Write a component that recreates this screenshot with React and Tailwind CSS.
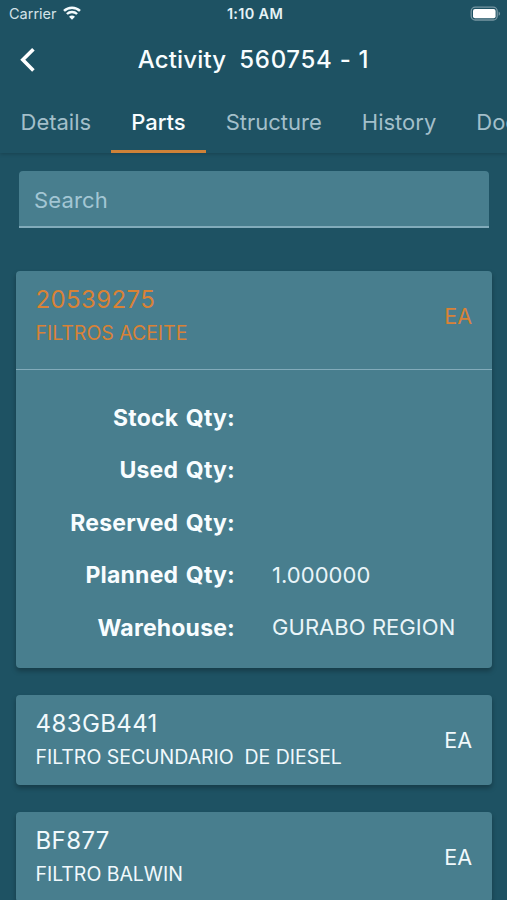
import React, { useState } from 'react';

const TABS = ['Details', 'Parts', 'Structure', 'History', 'Documents'];

const PARTS = [
    {
        code: '20539275',
        description: 'FILTROS ACEITE',
        uom: 'EA',
        details: [
            { label: 'Stock Qty:', value: '' },
            { label: 'Used Qty:', value: '' },
            { label: 'Reserved Qty:', value: '' },
            { label: 'Planned Qty:', value: '1.000000' },
            { label: 'Warehouse:', value: 'GURABO REGION' }
        ]
    },
    { code: '483GB441', description: 'FILTRO SECUNDARIO  DE DIESEL', uom: 'EA', details: [] },
    { code: 'BF877', description: 'FILTRO BALWIN', uom: 'EA', details: [] }
];

const WifiIcon = () => (
    <svg viewBox="0 0 18 14" className="relative -top-[1px] w-[18px] h-[14px]" fill="none" stroke="#f4fbfd">
        <path d="M1 4.9C5.4 0.6 12.6 0.6 17 4.9" strokeWidth="2.5" />
        <path d="M3.9 8C6.7 5.3 11.3 5.3 14.1 8" strokeWidth="2.4" />
        <path d="M9 13.8L6 10.8C7.7 9.2 10.3 9.2 12 10.8Z" fill="#f4fbfd" stroke="none" />
    </svg>
);

const BatteryIcon = () => (
    <svg viewBox="0 0 31 15" className="relative -top-[1px] w-[31px] h-[15px]">
        <rect x="1.2" y="1.2" width="26" height="12.8" rx="4" fill="none" stroke="#7797a3" strokeWidth="1.3" />
        <rect x="3" y="3" width="22.6" height="9.2" rx="2" fill="#ffffff" />
        <path d="M28.6 5.4C30.6 6.2 30.6 9 28.6 9.8Z" fill="#7797a3" />
    </svg>
);

const StatusBar = () => (
    <div className="h-7 grid grid-cols-3 items-center pl-[9px] pr-[6px]">
        <div className="flex items-center gap-[6px] text-[14.5px] text-[#d3e2e8]">
            <span>Carrier</span>
            <WifiIcon />
        </div>
        <div className="text-center text-[14.5px] tracking-[0.3px] font-semibold whitespace-nowrap text-[#e6f2f6]">1:10 AM</div>
        <div className="flex justify-end">
            <BatteryIcon />
        </div>
    </div>
);

const PartCard = ({ part, open, onToggle }) => (
    <div className="rounded-[4px] bg-[#487e8e] shadow-[0_3px_5px_rgba(0,0,0,0.28)]">
        <button
            onClick={onToggle}
            className={`w-full flex items-start justify-between px-5 pt-[14px] text-left ${open ? 'h-[98px] text-[#d98236]' : 'h-[90px] text-[#f1f9fc]'}`}
        >
            <div className="-ml-[0.5px]">
                <div className="text-[24px] leading-[30px] tracking-[0.4px]">{part.code}</div>
                <div className="mt-[6px] text-[19.5px] leading-6 tracking-[-0.03px] whitespace-pre">{part.description}</div>
            </div>
            <div className="mt-[17px] text-[21.5px] leading-7">{part.uom}</div>
        </button>

        {open && (
            <div className="border-t border-[#82abba] pt-[22px] pb-[14px]">
                {part.details.map(({ label, value }) => (
                    <div key={label} className="h-[52.4px] flex items-center gap-[37px]">
                        <div className="w-[219px] text-right text-[23px] tracking-[0.2px] [word-spacing:2px] font-bold text-[#f8fdff]">{label}</div>
                        <div className="text-[22px] tracking-[0.05px] text-[#eaf5f9]">{value}</div>
                    </div>
                ))}
            </div>
        )}
    </div>
);

export default function App() {
    const [tab, setTab] = useState('Parts');
    const [search, setSearch] = useState('');
    const [openCode, setOpenCode] = useState('20539275');

    return (
        <div className="h-[900px] w-full overflow-hidden bg-[#1e5263] font-[Inter,sans-serif]">
            <header className="h-[153px] shadow-[0_1px_4px_rgba(0,0,0,0.2)]">
                <StatusBar />
                <div className="h-16 grid grid-cols-[60px_1fr_60px] items-center">
                    <button className="pl-5">
                        <svg viewBox="0 0 16 26" className="w-4 h-[26px]" fill="none" stroke="#ffffff" strokeWidth="3.6">
                            <path d="M13.4 2.2L2.8 12.8L13.4 23.4" />
                        </svg>
                    </button>
                    <h1 className="text-center text-[24px] font-medium whitespace-pre tracking-[0.15px] text-[#f8fdff]">
                        Activity{'  '}<span className="tracking-[0.7px]">560754 - 1</span>
                    </h1>
                </div>
                <nav className="h-[61px] flex pl-[0.5px]">
                    {TABS.map((name) => (
                        <button
                            key={name}
                            onClick={() => setTab(name)}
                            className={`shrink-0 px-5 pt-[4px] pb-[1px] text-[22px] border-b-[3px] ${tab === name ? 'border-[#cf8238] font-medium text-[#f8fdff]' : 'border-transparent text-[#a3bfca]'}`}
                        >
                            {name}
                        </button>
                    ))}
                </nav>
            </header>

            <main className="pl-4 pr-[15px] pt-[18px]">
                <div className="px-[3px]">
                    <input
                        type="text"
                        value={search}
                        onChange={(e) => setSearch(e.target.value)}
                        placeholder="Search"
                        className="block w-full h-[57px] px-[15px] pt-[3px] rounded-t-[4px] bg-[#487e8e] border-b-2 border-[#82abba] text-[22px] tracking-[0.15px] text-white placeholder:text-[#a3c6d4] outline-none"
                    />
                </div>

                <div className="mt-[43px] flex flex-col gap-[27px]">
                    {PARTS.map((part) => (
                        <PartCard
                            key={part.code}
                            part={part}
                            open={openCode === part.code}
                            onToggle={() => setOpenCode(openCode === part.code ? null : part.code)}
                        />
                    ))}
                </div>
            </main>
        </div>
    );
}
